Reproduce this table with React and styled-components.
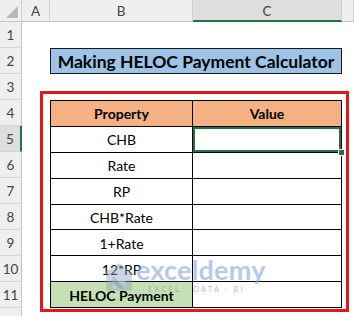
import React from "react";
import styled, { createGlobalStyle } from "styled-components";

const GlobalStyle = createGlobalStyle`
  html, body { margin: 0; padding: 0; background: #ffffff; overflow: hidden; }
  #root { width: 354px; height: 316px; }
`;

const FONT = `"Lato", "Open Sans", "Liberation Sans", sans-serif`;

const Sheet = styled.div`
  position: relative;
  width: 354px;
  height: 316px;
  overflow: hidden;
  display: grid;
  grid-template-columns: 22px 28px 143px 149px 12px;
  grid-template-rows: 22px repeat(12, 26px);
  font-family: ${FONT};
  background: #ffffff;
`;

const Corner = styled.div`
  grid-column: 1;
  grid-row: 1;
  background: #efefef;
  border-right: 1px solid #d0d0d0;
  border-bottom: 1px solid #c4c4c4;
  position: relative;
  &::after {
    content: "";
    position: absolute;
    right: 3px;
    bottom: 3px;
    width: 0;
    height: 0;
    border-left: 12px solid transparent;
    border-bottom: 12px solid #b8b8b8;
  }
`;

const ColHeader = styled.div`
  grid-row: 1;
  background: ${(p) => (p.$selected ? "#dedede" : "#efefef")};
  border-right: 1px solid #d0d0d0;
  border-bottom: ${(p) => (p.$selected ? "2px solid #217346" : "1px solid #c4c4c4")};
  box-sizing: border-box;
  display: flex;
  align-items: center;
  justify-content: center;
  font-size: 13.5px;
  color: #444;
  padding-top: ${(p) => (p.$selected ? "1px" : "0")};
`;

const RowHeader = styled.div`
  grid-column: 1;
  background: ${(p) => (p.$selected ? "#dedede" : "#efefef")};
  border-bottom: 1px solid #d6d6d6;
  border-right: ${(p) => (p.$selected ? "2px solid #217346" : "1px solid #c4c4c4")};
  box-sizing: border-box;
  display: flex;
  align-items: center;
  justify-content: center;
  font-size: 13.5px;
  color: #444;
`;

const Title = styled.div`
  grid-column: 3 / 5;
  grid-row: 3;
  background: #9dc3e6;
  border: 1px solid #1a1a1a;
  box-sizing: border-box;
  display: flex;
  align-items: center;
  justify-content: center;
  font-weight: 700;
  font-size: 17.5px;
  color: #000;
  padding-top: 1px;
`;

const Table = styled.div`
  grid-column: 3 / 5;
  grid-row: 5 / 13;
  display: grid;
  grid-template-columns: 141px 148px;
  grid-template-rows: repeat(8, 1fr);
  gap: 1px;
  padding: 1px;
  background: #000;
  box-sizing: border-box;
`;

const Cell = styled.div`
  position: relative;
  background: ${(p) =>
    p.$kind === "head" ? "#f4b183" : p.$kind === "result" ? "#c5e0b4" : "#ffffff"};
  display: flex;
  align-items: center;
  justify-content: center;
  font-size: 14px;
  font-weight: ${(p) => (p.$kind === "head" || p.$kind === "result" ? 700 : 400)};
  color: #000;
  padding-top: 1px;
  box-shadow: ${(p) => (p.$selected ? "0 0 0 2px #217346 inset" : "none")};
`;

const Handle = styled.span`
  position: absolute;
  right: -4px;
  bottom: -4px;
  width: 5px;
  height: 5px;
  background: #217346;
  border: 1px solid #ffffff;
  z-index: 2;
`;

const Highlight = styled.div`
  position: absolute;
  left: 40px;
  top: 91px;
  width: 309px;
  height: 221px;
  border: 3px solid #e3181d;
  box-sizing: border-box;
  pointer-events: none;
`;

const Watermark = styled.div`
  position: absolute;
  left: 104px;
  top: 255px;
  display: flex;
  align-items: flex-start;
  gap: 2px;
  pointer-events: none;
  opacity: 0.85;
`;

const Brand = styled.div`
  display: flex;
  flex-direction: column;
  align-items: flex-start;
`;

const BrandName = styled.div`
  font-family: ${FONT};
  font-weight: 700;
  font-size: 27px;
  line-height: 30px;
  color: rgba(140, 172, 226, 0.75);
  letter-spacing: 0.2px;
`;

const BrandTag = styled.div`
  font-family: ${FONT};
  font-size: 7.5px;
  letter-spacing: 2.2px;
  color: rgba(140, 140, 140, 0.7);
  margin-left: 12px;
  margin-top: 0px;
`;

const LogoIcon = () => (
  <svg width="30" height="32" viewBox="0 0 28 30" style={{ marginTop: 6 }}>
    <path d="M2 10 L14 2 L26 10 L26 28 L2 28 Z" fill="rgba(150,165,190,0.55)" />
    <path d="M8 14 L20 14 L20 26 L8 26 Z" fill="rgba(200,210,225,0.6)" />
    <path d="M8 14 L20 26 L14 26 L8 20 Z" fill="rgba(130,150,180,0.6)" />
  </svg>
);

const rows = [
  { a: "Property", b: "Value", kind: "head" },
  { a: "CHB", b: "", selected: true },
  { a: "Rate", b: "" },
  { a: "RP", b: "" },
  { a: "CHB*Rate", b: "" },
  { a: "1+Rate", b: "" },
  { a: "12*RP", b: "" },
  { a: "HELOC Payment", b: "", kind: "result" },
];

export default function App() {
  return (
    <>
      <GlobalStyle />
      <Sheet>
        <Corner />
        <ColHeader style={{ gridColumn: 2 }}>A</ColHeader>
        <ColHeader style={{ gridColumn: 3 }}>B</ColHeader>
        <ColHeader style={{ gridColumn: 4 }} $selected>C</ColHeader>
        <ColHeader style={{ gridColumn: 5 }} />
        {Array.from({ length: 12 }, (_, i) => (
          <RowHeader key={i} style={{ gridRow: i + 2 }} $selected={i + 1 === 5}>
            {i + 1}
          </RowHeader>
        ))}
        <Title>Making HELOC Payment Calculator</Title>
        <Table>
          {rows.map((r, i) => (
            <React.Fragment key={i}>
              <Cell $kind={r.kind}>{r.a}</Cell>
              <Cell $kind={r.kind === "head" ? "head" : undefined} $selected={r.selected}>
                {r.b}
                {r.selected && <Handle />}
              </Cell>
            </React.Fragment>
          ))}
        </Table>
        <Highlight />
        <Watermark>
          <LogoIcon />
          <Brand>
            <BrandName>exceldemy</BrandName>
            <BrandTag>EXCEL · DATA · BI</BrandTag>
          </Brand>
        </Watermark>
      </Sheet>
    </>
  );
}
